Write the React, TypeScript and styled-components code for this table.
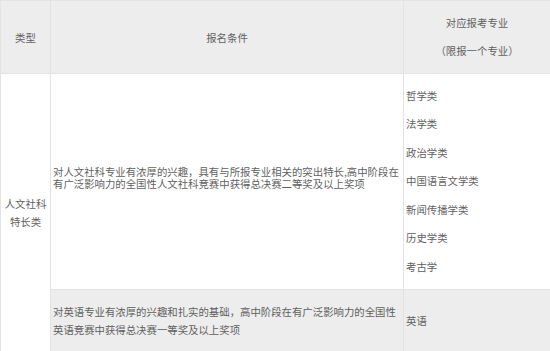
import React from 'react';
import styled, { createGlobalStyle } from 'styled-components';

const GlobalStyle = createGlobalStyle`
  html, body {
    margin: 0;
    padding: 0;
    background: #fff;
  }
  body {
    font-family: "Noto Sans CJK SC", "Noto Sans", sans-serif;
    color: #5f5f5f;
  }
`;

const Table = styled.table`
  width: 550px;
  table-layout: fixed;
  border-collapse: collapse;
  font-size: 10.4px;
`;

const Row = styled.tr<{ shaded?: boolean; height: number }>`
  height: ${(props) => props.height}px;
  background: ${(props) => (props.shaded ? '#ededed' : '#fff')};
`;

const HeadCell = styled.th`
  border: 1px solid #e3e3e3;
  font-weight: normal;
  text-align: center;
  vertical-align: middle;
  padding: 0 2px;
`;

const Cell = styled.td<{ center?: boolean; lineHeight: number; white?: boolean }>`
  border: 1px solid #e3e3e3;
  padding: 0 2px;
  text-align: ${(props) => (props.center ? 'center' : 'left')};
  vertical-align: middle;
  line-height: ${(props) => props.lineHeight}px;
  background: ${(props) => (props.white ? '#fff' : 'transparent')};
`;

const Condition = styled.p<{ lift?: number }>`
  margin: 0 0 ${(props) => props.lift ?? 0}px;
`;

const Item = styled.div`
  line-height: 28.5px;
`;

const majors = ['哲学类', '法学类', '政治学类', '中国语言文学类', '新闻传播学类', '历史学类', '考古学'];

const App = () => {
  return (
    <>
      <GlobalStyle />
      <Table>
        <colgroup>
          <col style={{ width: 50 }} />
          <col style={{ width: 353 }} />
          <col style={{ width: 147 }} />
        </colgroup>
        <tbody>
          <Row shaded height={73}>
            <HeadCell>类型</HeadCell>
            <HeadCell>报名条件</HeadCell>
            <HeadCell>
              <Item>对应报考专业</Item>
              <Item>（限报一个专业）</Item>
            </HeadCell>
          </Row>
          <Row height={216}>
            <Cell center white rowSpan={2} lineHeight={18}>
              人文社科特长类
            </Cell>
            <Cell lineHeight={12.4}>
              <Condition lift={7}>
                对人文社科专业有浓厚的兴趣，具有与所报专业相关的突出特长,高中阶段在有广泛影响力的全国性人文社科竞赛中获得总决赛二等奖及以上奖项
              </Condition>
            </Cell>
            <Cell lineHeight={18}>
              {majors.map((m) => (
                <Item key={m}>{m}</Item>
              ))}
            </Cell>
          </Row>
          <Row shaded height={62}>
            <Cell lineHeight={17.5}>
              <Condition>
                对英语专业有浓厚的兴趣和扎实的基础，高中阶段在有广泛影响力的全国性英语竞赛中获得总决赛一等奖及以上奖项
              </Condition>
            </Cell>
            <Cell lineHeight={18}>英语</Cell>
          </Row>
        </tbody>
      </Table>
    </>
  );
};

export default App;
